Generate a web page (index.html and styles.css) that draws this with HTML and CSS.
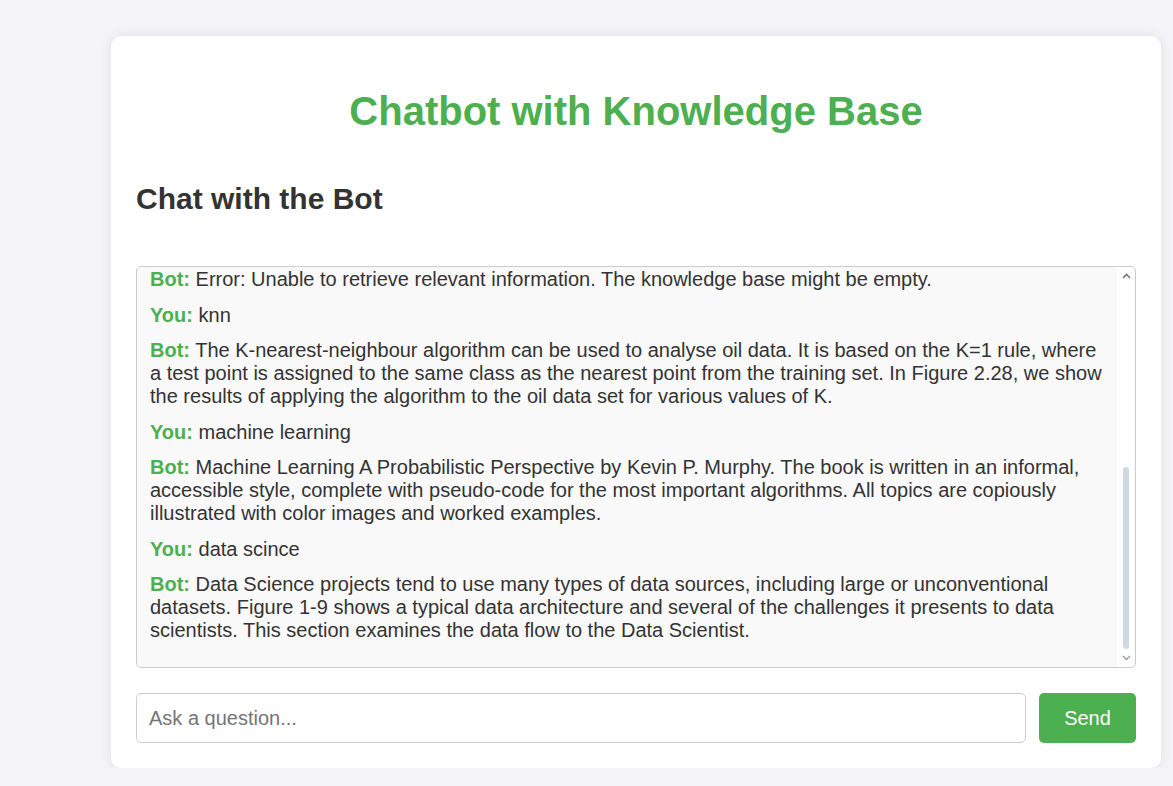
FILE: index.html
```html
<!DOCTYPE html>
<html>
<head>
<meta charset="utf-8">
<link rel="stylesheet" href="styles.css">
</head>
<body>
<div class="container">
  <h1 class="title">Chatbot with Knowledge Base</h1>
  <h2 class="subtitle">Chat with the Bot</h2>
  <div class="chat-frame">
    <div class="chat-box">
      <p class="msg"><span class="who">Bot:</span> Error: Unable to retrieve relevant information. The knowledge base might be empty.</p>
      <p class="msg"><span class="who">You:</span> knn</p>
      <p class="msg"><span class="who">Bot:</span> The K-nearest-neighbour algorithm can be used to analyse oil data. It is based on the K=1 rule, where a test point is assigned to the same class as the nearest point from the training set. In Figure 2.28, we show the results of applying the algorithm to the oil data set for various values of K.</p>
      <p class="msg"><span class="who">You:</span> machine learning</p>
      <p class="msg"><span class="who">Bot:</span> Machine Learning A Probabilistic Perspective by Kevin P. Murphy. The book is written in an informal, accessible style, complete with pseudo-code for the most important algorithms. All topics are copiously illustrated with color images and worked examples.</p>
      <p class="msg"><span class="who">You:</span> data scince</p>
      <p class="msg"><span class="who">Bot:</span> Data Science projects tend to use many types of data sources, including large or unconventional datasets. Figure 1-9 shows a typical data architecture and several of the challenges it presents to data scientists. This section examines the data flow to the Data Scientist.</p>
    </div>
    <div class="scroll-track">
      <svg class="arrow arrow-up" width="9" height="6" viewBox="0 0 9 6"><polyline points="1,5 4.5,1.5 8,5" fill="none" stroke="#787878" stroke-width="1.6"/></svg>
      <div class="thumb"></div>
      <svg class="arrow arrow-down" width="9" height="6" viewBox="0 0 9 6"><polyline points="1,1 4.5,4.5 8,1" fill="none" stroke="#9a9a9a" stroke-width="1.4"/></svg>
    </div>
  </div>
  <div class="input-row">
    <input class="question" type="text" placeholder="Ask a question...">
    <button class="send">Send</button>
  </div>
</div>
</body>
</html>
```
FILE: styles.css
```css
html, body {
  margin: 0;
  padding: 0;
}
body {
  background: #f4f4f9;
  font-family: "Liberation Sans", Arial, sans-serif;
  color: #333;
  padding: 36px 0 0 111px;
}
.container {
  width: 1000px;
  padding: 25px;
  background: #fff;
  border-radius: 10px;
  box-shadow: 0 0 12px rgba(0, 0, 0, 0.1);
}
.title {
  text-align: center;
  color: #4caf50;
  font-size: 40px;
  margin: 27px 0 0;
  line-height: 46px;
}
.subtitle {
  font-size: 30px;
  margin: 48px 0 0;
  line-height: 34px;
}
.chat-frame {
  position: relative;
  margin-top: 50px;
}
.chat-box {
  height: 402px;
  box-sizing: border-box;
  border: 1px solid #ccc;
  border-radius: 5px;
  background: #f9f9f9;
  padding: 1px 30px 0 13px;
  overflow: hidden;
}
.msg {
  margin: 0 0 12.5px;
  font-size: 20px;
  line-height: 23px;
}
.who {
  color: #4caf50;
  font-weight: bold;
}
.scroll-track {
  position: absolute;
  top: 1px;
  right: 2px;
  bottom: 1px;
  width: 17px;
  background: #fff;
  border-top-right-radius: 4px;
  border-bottom-right-radius: 4px;
}
.arrow {
  position: absolute;
  left: 5px;
}
.arrow-up {
  top: 6px;
}
.arrow-down {
  bottom: 6px;
}
.thumb {
  position: absolute;
  left: 6px;
  top: 200px;
  width: 6px;
  height: 182px;
  border-radius: 3px;
  background: #cfd9e3;
}
.input-row {
  display: flex;
  gap: 13px;
  margin-top: 25px;
}
.question {
  flex: 1;
  height: 50px;
  box-sizing: border-box;
  border: 1px solid #ccc;
  border-radius: 5px;
  padding: 0 12px;
  font-family: "Liberation Sans", Arial, sans-serif;
  font-size: 20px;
  color: #333;
}
.question::placeholder {
  color: #757575;
}
.send {
  width: 97px;
  height: 50px;
  border: none;
  border-radius: 5px;
  background: #4caf50;
  color: #fff;
  font-family: "Liberation Sans", Arial, sans-serif;
  font-size: 20px;
}
```
